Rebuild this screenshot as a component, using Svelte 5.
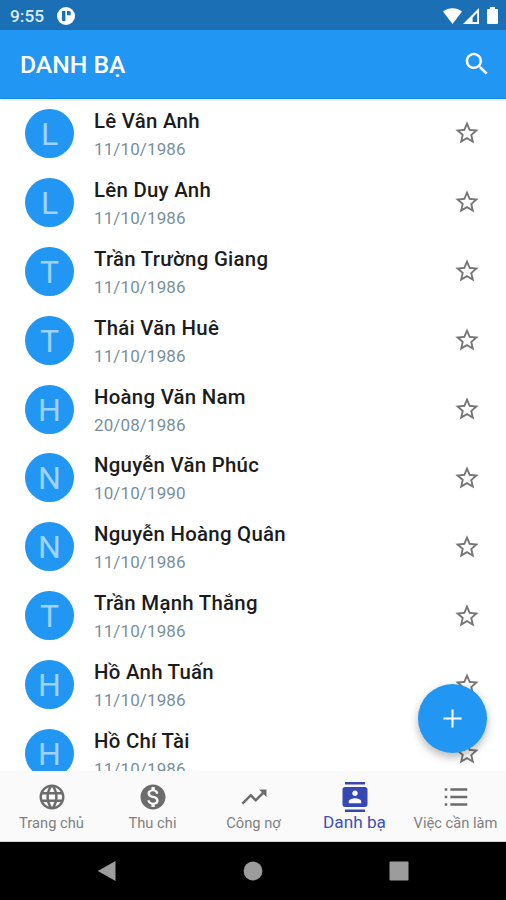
<script>
  const contacts = [
    { name: 'Lê Vân Anh', date: '11/10/1986' },
    { name: 'Lên Duy Anh', date: '11/10/1986' },
    { name: 'Trần Trường Giang', date: '11/10/1986' },
    { name: 'Thái Văn Huê', date: '11/10/1986' },
    { name: 'Hoàng Văn Nam', date: '20/08/1986' },
    { name: 'Nguyễn Văn Phúc', date: '10/10/1990' },
    { name: 'Nguyễn Hoàng Quân', date: '11/10/1986' },
    { name: 'Trần Mạnh Thắng', date: '11/10/1986' },
    { name: 'Hồ Anh Tuấn', date: '11/10/1986' },
    { name: 'Hồ Chí Tài', date: '11/10/1986' },
  ];

  const tabs = [
    { label: 'Trang chủ', icon: 'M11.99 2C6.47 2 2 6.48 2 12s4.47 10 9.99 10C17.52 22 22 17.52 22 12S17.52 2 11.99 2zm6.93 6h-2.95c-.32-1.25-.78-2.45-1.38-3.56 1.84.63 3.37 1.91 4.33 3.56zM12 4.04c.83 1.2 1.48 2.53 1.91 3.96h-3.82c.43-1.43 1.08-2.76 1.91-3.96zM4.26 14C4.1 13.36 4 12.69 4 12s.1-1.36.26-2h3.38c-.08.66-.14 1.32-.14 2s.06 1.34.14 2H4.26zm.82 2h2.95c.32 1.25.78 2.45 1.38 3.56-1.84-.63-3.37-1.9-4.33-3.56zm2.95-8H5.08c.96-1.66 2.49-2.93 4.33-3.56C8.81 5.55 8.35 6.75 8.03 8zM12 19.96c-.83-1.2-1.48-2.53-1.91-3.96h3.82c-.43 1.43-1.08 2.76-1.91 3.96zM14.34 14H9.66c-.09-.66-.16-1.32-.16-2s.07-1.35.16-2h4.68c.09.65.16 1.32.16 2s-.07 1.34-.16 2zm.25 5.56c.6-1.11 1.06-2.31 1.38-3.56h2.95c-.96 1.65-2.49 2.93-4.33 3.56zM16.36 14c.08-.66.14-1.32.14-2s-.06-1.34-.14-2h3.38c.16.64.26 1.31.26 2s-.1 1.36-.26 2h-3.38z' },
    { label: 'Thu chi', icon: 'M12 2C6.48 2 2 6.48 2 12s4.48 10 10 10 10-4.48 10-10S17.52 2 12 2zm1.41 16.09V20h-2.67v-1.93c-1.71-.36-3.16-1.46-3.27-3.4h1.96c.1 1.05.82 1.87 2.65 1.87 1.96 0 2.4-.98 2.4-1.59 0-.83-.44-1.61-2.67-2.14-2.48-.6-4.18-1.62-4.18-3.67 0-1.72 1.39-2.84 3.11-3.21V4h2.67v1.95c1.86.45 2.79 1.86 2.85 3.39H14.3c-.05-1.11-.64-1.87-2.22-1.87-1.5 0-2.4.68-2.4 1.64 0 .84.65 1.39 2.67 1.91s4.18 1.39 4.18 3.91c-.01 1.83-1.38 2.83-3.12 3.16z' },
    { label: 'Công nợ', icon: 'M16 6l2.29 2.29-4.88 4.88-4-4L2 16.59 3.41 18l6-6 4 4 6.3-6.29L22 12V6z' },
    { label: 'Danh bạ', icon: 'M20 0H4v2h16V0zM4 24h16v-2H4v2zM20 4H4c-1.1 0-2 .9-2 2v12c0 1.1.9 2 2 2h16c1.1 0 2-.9 2-2V6c0-1.1-.9-2-2-2zm-8 2.75c1.24 0 2.25 1.01 2.25 2.25s-1.01 2.25-2.25 2.25S9.75 10.24 9.75 9 10.76 6.75 12 6.75zM17 17H7v-1.5c0-1.67 3.33-2.5 5-2.5s5 .83 5 2.5V17z' },
    { label: 'Việc cần làm', icon: 'M3 5h2v2H3zm0 6h2v2H3zm0 6h2v2H3zM7.5 5H21v2H7.5zm0 6H21v2H7.5zm0 6H21v2H7.5z' },
  ];

  let active = $state(3);
</script>

<div class="screen">
  <div class="status">
    <span class="clock">9:55</span>
    <svg class="notif" viewBox="0 0 18 18">
      <circle cx="9" cy="9" r="9" fill="#fff" />
      <path d="M4.9 4h3.5v10H6a1.1 1.1 0 0 1-1.1-1.1zM10 4h2.3a1.4 1.4 0 0 1 1.4 1.4v2.9H10z" fill="#1b6fb5" />
    </svg>
    <svg class="wifi" viewBox="0 0 19 16"><path d="M0 3.6C5-1 14-1 19 3.6L9.5 16z" /></svg>
    <svg class="signal" viewBox="0 0 16 16"><path fill-rule="evenodd" d="M16 0v16H0zM14.2 4.8L9.6 9.4V14h4.6z" /></svg>
    <svg class="battery" viewBox="0 0 11 17"><path d="M3 0h5v2h2a1 1 0 0 1 1 1v13a1 1 0 0 1-1 1H1a1 1 0 0 1-1-1V3a1 1 0 0 1 1-1h2z" /></svg>
  </div>

  <header>
    <h1>DANH BẠ</h1>
    <button aria-label="Tìm kiếm">
      <svg viewBox="0 0 24 24"><path d="M15.5 14h-.79l-.28-.27C15.41 12.59 16 11.11 16 9.5 16 5.91 13.09 3 9.5 3S3 5.91 3 9.5 5.91 16 9.5 16c1.61 0 3.09-.59 4.23-1.57l.27.28v.79l5 4.99L20.49 19l-4.99-5zm-6 0C7.01 14 5 11.99 5 9.5S7.01 5 9.5 5 14 7.01 14 9.5 11.99 14 9.5 14z" /></svg>
    </button>
  </header>

  <main>
    {#each contacts as c}
      <div class="row">
        <div class="avatar">{c.name[0]}</div>
        <div class="info">
          <div class="name">{c.name}</div>
          <div class="date">{c.date}</div>
        </div>
        <svg class="star" viewBox="0 0 24 24"><path d="M22 9.24l-7.19-.62L12 2 9.19 8.63 2 9.24l5.46 4.73L5.82 21 12 17.27 18.18 21l-1.63-7.03L22 9.24zM12 15.4l-3.76 2.27 1-4.28-3.32-2.88 4.38-.38L12 6.1l1.71 4.04 4.38.38-3.32 2.88 1 4.28L12 15.4z" /></svg>
      </div>
    {/each}
    <button class="fab" aria-label="Thêm">
      <svg viewBox="0 0 24 24"><path d="M19 12.8h-6.2V19h-1.6v-6.2H5v-1.6h6.2V5h1.6v6.2H19z" /></svg>
    </button>
  </main>

  <nav>
    {#each tabs as tab, i}
      <button class:active={active === i} onclick={() => (active = i)}>
        <svg viewBox="0 0 24 24"><path d={tab.icon} /></svg>
        <span>{tab.label}</span>
      </button>
    {/each}
  </nav>

  <div class="system">
    <svg viewBox="0 0 20 20"><path d="M18.5 0v20L.8 10z" /></svg>
    <svg viewBox="0 0 20 20"><circle cx="10" cy="10" r="9.4" /></svg>
    <svg viewBox="0 0 20 20"><rect x=".5" y=".5" width="19" height="19" rx="1" /></svg>
  </div>
</div>

<style>
  :global(body){margin:0}
  .screen{width:506px;height:900px;display:flex;flex-direction:column;overflow:hidden;
    background:#fff;font-family:Roboto,sans-serif}
  button{border:0;background:none;padding:0;font:inherit;color:inherit;cursor:pointer}
  svg{display:block;fill:currentColor;flex:none}

  .status{height:30px;flex:none;display:flex;align-items:center;box-sizing:border-box;
    padding:1px 8px 0 10px;background:#1b6fb5;color:#fff}
  .clock{width:47px;font-size:17.3px;font-weight:500;color:#dcecf9}
  .notif{width:18px;height:18px}
  .wifi{width:19px;height:16px;margin-left:auto}
  .signal{width:16px;height:16px;margin-left:1px}
  .battery{width:11px;height:17px;margin-left:8px}

  header{height:69px;flex:none;display:flex;align-items:center;justify-content:space-between;
    box-sizing:border-box;padding:0 14px 0 20px;background:#2196f3;color:#fff;
    border-bottom:1px solid #168be6;box-shadow:0 1px 2px rgba(90,40,40,.16);z-index:1}
  h1{margin:2px 0 0;font-size:24.7px;font-weight:500;line-height:30px}
  header svg{width:30px;height:30px}

  main{flex:1;min-height:0;position:relative;overflow:hidden}
  .row{height:68.9px;display:flex;align-items:center;box-sizing:border-box;padding:0 25px}
  .avatar{width:49px;height:49px;flex:none;border-radius:50%;background:#2196f3;color:#9fd2fa;
    display:grid;place-items:center;box-sizing:border-box;padding-top:1px;font-size:32px;line-height:48px}
  .info{flex:1;padding:2px 0 0 20px}
  .name{font-size:20.4px;line-height:26px;font-weight:500;letter-spacing:.27px;color:#1c1c1c;white-space:nowrap}
  .date{margin-top:3px;font-size:17px;line-height:24px;letter-spacing:.12px;color:#78909c}
  .star{width:28px;height:28px;color:#757575}
  .fab{position:absolute;right:19px;bottom:18px;width:69px;height:69px;border-radius:50%;
    display:grid;place-items:center;background:#2196f3;color:#fff;
    box-shadow:0 5px 8px rgba(0,0,0,.22),0 1px 10px rgba(0,0,0,.08)}
  .fab svg{width:31px;height:31px}

  nav{height:71px;flex:none;display:grid;grid-template-columns:repeat(5,1fr);box-sizing:border-box;
    padding-left:1px;background:#fafafa;border-bottom:1px solid #d0d0d0}
  nav button{display:flex;flex-direction:column;align-items:center;padding-top:11px;color:#6c6c6c}
  nav svg{width:30px;height:30px}
  nav span{margin-top:2px;font-size:14.7px;line-height:18px;white-space:nowrap;color:#808080}
  nav .active{color:#3647b3}
  nav .active span{margin-top:1px;font-size:17.2px;color:#3f51b5}

  .system{height:58px;flex:none;display:flex;align-items:center;justify-content:center;gap:126px;
    background:#000;color:#9c9c9c}
  .system svg{width:20px;height:20px}
</style>
